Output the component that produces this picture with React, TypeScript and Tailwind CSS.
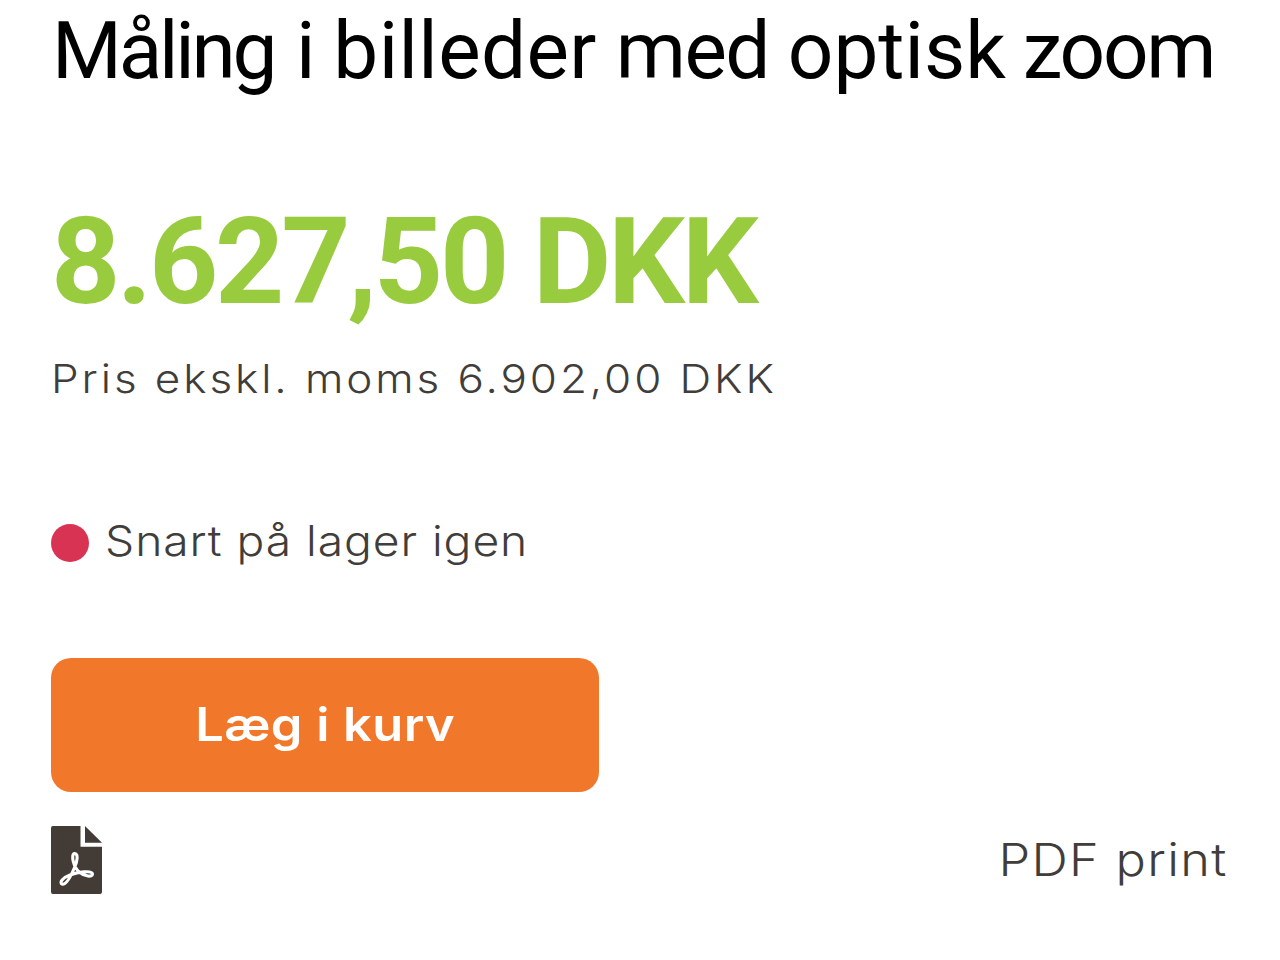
function PdfIcon() {
  return (
    <svg className="h-[68px] w-[51px]" viewBox="0 0 51 68" fill="none" aria-hidden="true">
      <path
        d="M2 0H29.5V20.7H51V66a2 2 0 0 1-2 2H2a2 2 0 0 1-2-2V2a2 2 0 0 1 2-2Z"
        fill="#433b36"
      />
      <path d="M34 0L51 16.7H34Z" fill="#433b36" />
      <path
        d="M23.5 27.5C27.5 27.5 26.5 35 23.5 41.5C20 50 15.5 58.5 11.5 58.3C7.5 57 12 51.5 19 49C27 46 41 44 41.5 48C41.5 51.5 33.5 50.5 29 46.5C22.5 42.5 19.5 28 23.5 27.5Z"
        stroke="#fff"
        strokeWidth="3.1"
        strokeLinejoin="round"
      />
    </svg>
  );
}

export default function App() {
  return (
    <main className="flex h-[960px] w-[1280px] flex-col overflow-hidden bg-white pr-[52px] pl-[51px] font-['Inter',sans-serif] text-[#403d3a]">
      <h1 className="mt-[2px] ml-[1px] h-[98px] font-['Roboto',sans-serif] text-[80px] leading-[98px] tracking-[-1px] whitespace-nowrap text-black">
        <span className="mr-[3px] tracking-[-3.2px]">Måling</span> i{' '}
        <span className="tracking-[0.4px]">billeder</span>{' '}
        <span className="tracking-[-1.5px]">med</span>{' '}
        <span className="tracking-[0px]">optisk</span>{' '}
        <span className="-ml-[2px] tracking-[-2.2px]">zoom</span>
      </h1>
      <p className="mt-[90px] h-[144px] font-['Roboto',sans-serif] text-[121px] leading-[144px] font-bold tracking-[-3.3px] whitespace-nowrap text-[#98cb3d]">
        8.627,50 DKK
      </p>
      <p className="mt-[21px] h-[48px] origin-left scale-x-110 text-[40px] leading-[48px] font-[350] tracking-[2.65px] whitespace-nowrap">
        Pris ekskl. moms 6.902,00 DKK
      </p>

      <div className="mt-[112px] flex h-[52px] items-center">
        <span className="mt-[3px] size-[38px] rounded-full bg-[#d93353]" />
        <span className="ml-[16px] origin-left scale-x-110 text-[42px] leading-[52px] font-[350] tracking-[0.85px] whitespace-nowrap">
          Snart på lager igen
        </span>
      </div>

      <button
        type="button"
        className="mt-[91px] flex h-[134px] w-[548px] items-center justify-center rounded-[20px] bg-[#f1782a] pb-[3px] text-[46px] leading-[56px] font-semibold whitespace-nowrap text-white"
      >
        <span className="scale-x-110 tracking-[0.4px]">Læg i kurv</span>
      </button>

      <div className="mt-[34px] flex h-[68px] items-center justify-between">
        <PdfIcon />
        <a
          href="#"
          className="origin-right scale-x-112 text-[45px] leading-[68px] font-[350] tracking-[1.2px] whitespace-nowrap"
        >
          PDF print
        </a>
      </div>
    </main>
  );
}
